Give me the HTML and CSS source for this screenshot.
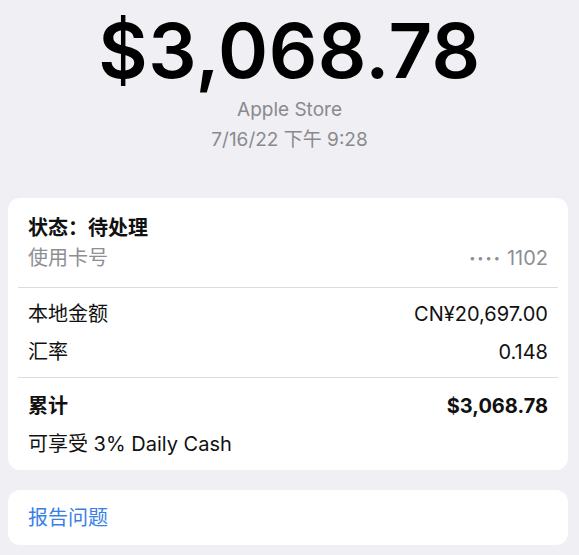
FILE: index.html
```html
<!DOCTYPE html>
<html lang="zh">
<head>
<meta charset="utf-8">
<link rel="stylesheet" href="styles.css">
</head>
<body>
<div class="page">
  <header class="summary">
    <div class="amount">$3,068.78</div>
    <div class="merchant">Apple Store</div>
    <div class="date">7/16/22 下午 9:28</div>
  </header>

  <section class="card">
    <div class="group group-status">
      <div class="row"><span class="bold">状态：待处理</span></div>
      <div class="row muted"><span>使用卡号</span><span class="card-no"><span class="dots">••••</span>1102</span></div>
    </div>
    <div class="divider"></div>
    <div class="group group-local">
      <div class="row"><span>本地金额</span><span>CN¥20,697.00</span></div>
      <div class="row"><span>汇率</span><span>0.148</span></div>
    </div>
    <div class="divider"></div>
    <div class="group group-total">
      <div class="row bold"><span>累计</span><span>$3,068.78</span></div>
      <div class="row"><span>可享受 3% Daily Cash</span></div>
    </div>
  </section>

  <section class="card card-link">
    <div class="row link">报告问题</div>
  </section>
</div>
</body>
</html>
```

FILE: styles.css
```css
html, body {
  margin: 0;
  padding: 0;
  background: #efeff4;
}

body {
  font-family: "Inter", "Noto Sans CJK SC", sans-serif;
  color: #111;
}

.page {
  padding: 8px 11px 0 8px;
}

.summary {
  display: flex;
  flex-direction: column;
  align-items: center;
  margin-left: 3px;
  margin-bottom: 43px;
}

.amount {
  font-size: 76px;
  line-height: 84px;
  font-weight: 600;
  color: #000;
  letter-spacing: 0.5px;
}

.merchant,
.date {
  font-size: 19px;
  line-height: 30px;
  color: #8a8a8e;
}

.merchant {
  margin-top: 3px;
}

.card {
  background: #fff;
  border-radius: 12px;
}

.group {
  display: flex;
  flex-direction: column;
  padding: 0 20px;
}

.group-status {
  padding-top: 18px;
  padding-bottom: 17px;
  gap: 6px;
}

.group-local {
  padding-top: 14px;
  padding-bottom: 13px;
  gap: 14px;
}

.group-total {
  padding-top: 16px;
  padding-bottom: 14px;
  gap: 14px;
}

.row {
  display: flex;
  justify-content: space-between;
  font-size: 20px;
  line-height: 24px;
}

.bold {
  font-weight: 700;
}

.muted {
  color: #8e8e93;
}

.card-no {
  display: flex;
  align-items: center;
}

.dots {
  font-size: 11px;
  letter-spacing: 2px;
  margin-right: 5px;
}

.divider {
  height: 1px;
  background: #dcdce0;
  margin: 0 10px;
}

.card-link {
  margin-top: 20px;
  padding: 16px 20px 15px;
}

.link {
  color: #3a7fe6;
}
```
